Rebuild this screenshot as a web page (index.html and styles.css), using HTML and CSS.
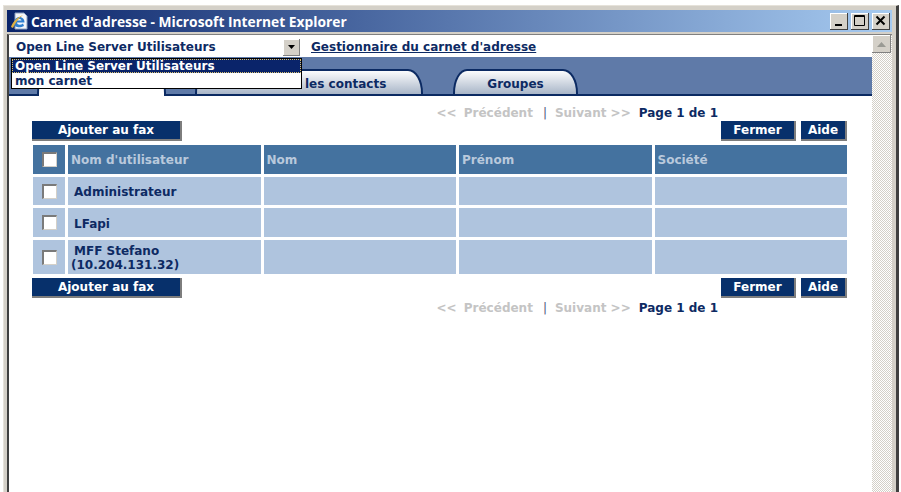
FILE: index.html
```html
<!DOCTYPE html>
<html lang="fr">
<head>
    <meta charset="UTF-8">
    <meta name="viewport" content="width=device-width, initial-scale=1.0">
    <title>Carnet d'adresse</title>
    <link rel="stylesheet" href="styles.css">
</head>
<body>
    <div class="window">
        <div class="titlebar">
            <svg class="ie-icon" width="18" height="18" viewBox="0 0 18 18">
                <path d="M5 1h9l3 3v13H5z" fill="#f4f6fa" stroke="#8ca0c0" stroke-width="1"/>
                <path d="M4 11.500c0-4 2.500-6.500 5.500-6.500s5 2.300 5 5.500H7c.2 2.500 3.500 3 6 1l1 2.500c-4 2.500-10 1.500-10-2.500zM7 8.500h4.500C11 6.500 7.800 6.500 7 8.500z" fill="#2f7fd0"/>
                <path d="M1 15c1-4 6-10 12-12-4 3-8 8-10 13z" fill="#e0b040"/>
            </svg>
            <span class="title-text">Carnet d'adresse - Microsoft Internet Explorer</span>
            <div class="win-buttons">
                <span class="win-btn"><svg width="16" height="14" viewBox="0 0 16 14"><rect x="4" y="10" width="7" height="2" fill="#000"/></svg></span>
                <span class="win-btn"><svg width="16" height="14" viewBox="0 0 16 14"><path d="M2.500 1.500h10v10h-10z M2 2.500h11" fill="none" stroke="#000"/></svg></span>
                <span class="win-btn win-close"><svg width="16" height="14" viewBox="0 0 16 14"><path d="M3.500 2.500l8 8M11.500 2.500l-8 8" stroke="#000" stroke-width="2"/></svg></span>
            </div>
        </div>

        <div class="client">
            <div class="page">
                <div class="selector-row">
                    <div class="select">
                        <span>Open Line Server Utilisateurs</span>
                        <span class="select-arrow"><svg width="7" height="4" viewBox="0 0 7 4"><path d="M0 0h7L3.500 4z" fill="#000"/></svg></span>
                    </div>
                    <a class="manager-link" href="#">Gestionnaire du carnet d'adresse</a>
                </div>

                <div class="tabbar">
                    <div class="tab tab-active"></div>
                    <div class="tab tab-contacts">les contacts</div>
                    <div class="tab tab-groups">Groupes</div>
                </div>

                <div class="content">
                    <div class="pager">
                        <span class="pager-muted pager-prev">&lt;&lt; Précédent</span>
                        <span class="pager-sep">|</span>
                        <span class="pager-muted">Suivant &gt;&gt;</span>
                        <span class="pager-page">Page 1 de 1</span>
                    </div>
                    <div class="actions">
                        <a class="btn btn-add" href="#">Ajouter au fax</a>
                        <div class="actions-right">
                            <a class="btn btn-close" href="#">Fermer</a>
                            <a class="btn btn-help" href="#">Aide</a>
                        </div>
                    </div>

                    <table class="contacts">
                        <thead>
                            <tr>
                                <th class="col-check"><input class="check" type="checkbox"></th>
                                <th>Nom d'utilisateur</th>
                                <th>Nom</th>
                                <th>Prénom</th>
                                <th>Société</th>
                            </tr>
                        </thead>
                        <tbody>
                            <tr>
                                <td class="col-check"><input class="check" type="checkbox"></td>
                                <td class="user"><span class="user-first">Administrateur</span></td>
                                <td></td><td></td><td></td>
                            </tr>
                            <tr class="row-mid">
                                <td class="col-check"><input class="check" type="checkbox"></td>
                                <td class="user"><span class="user-first">LFapi</span></td>
                                <td></td><td></td><td></td>
                            </tr>
                            <tr class="row-tall">
                                <td class="col-check"><input class="check" type="checkbox"></td>
                                <td class="user"><span class="user-first">MFF Stefano</span><br>(10.204.131.32)</td>
                                <td></td><td></td><td></td>
                            </tr>
                        </tbody>
                    </table>

                    <div class="actions actions-bottom">
                        <a class="btn btn-add" href="#">Ajouter au fax</a>
                        <div class="actions-right">
                            <a class="btn btn-close" href="#">Fermer</a>
                            <a class="btn btn-help" href="#">Aide</a>
                        </div>
                    </div>
                    <div class="pager pager-bottom">
                        <span class="pager-muted pager-prev">&lt;&lt; Précédent</span>
                        <span class="pager-sep">|</span>
                        <span class="pager-muted">Suivant &gt;&gt;</span>
                        <span class="pager-page">Page 1 de 1</span>
                    </div>
                </div>

                <div class="dropdown">
                    <div class="dropdown-item dropdown-selected">Open Line Server Utilisateurs</div>
                    <div class="dropdown-item">mon carnet</div>
                </div>
            </div>

            <div class="scrollbar">
                <span class="scroll-up"><svg width="9" height="5" viewBox="0 0 9 5"><path d="M0 5h9L4.500 0z" fill="#9a9a94"/></svg></span>
            </div>
        </div>
    </div>
</body>
</html>
```

FILE: styles.css
```css
html, body {
    margin: 0;
    padding: 0;
    background: #fff;
    height: 492px;
    overflow: hidden;
}
body {
    font-family: "DejaVu Sans", Verdana, sans-serif;
    font-size: 12px;
    font-weight: bold;
    color: #0d2a63;
    padding: 5px 2px 0 3px;
    box-sizing: border-box;
}
.window {
    height: 487px;
    box-sizing: border-box;
    background: #d4d0c8;
    border-top: 1px solid #e6e2da;
    border-left: 1px solid #e6e2da;
    border-right: 3px solid #404040;
    padding: 4px 4px 0 3px;
    display: flex;
    flex-direction: column;
}
.titlebar {
    height: 22px;
    flex: none;
    display: flex;
    align-items: center;
    background: linear-gradient(to right, #0a246a, #a6caf0);
    color: #fff;
    padding: 0 2px 0 3px;
}
.ie-icon {
    flex: none;
    margin-right: 3px;
}
.title-text {
    font-family: "Open Sans", "DejaVu Sans", sans-serif;
    font-size: 13.800px;
    font-weight: bold;
    white-space: nowrap;
}
.win-buttons {
    margin-left: auto;
    display: flex;
    gap: 3px;
}
.win-btn {
    width: 18px;
    height: 17px;
    background: #d4d0c8;
    box-shadow: inset -1px -1px 0 #404040, inset 1px 1px 0 #fff;
    display: flex;
    align-items: center;
    justify-content: center;
}
.client {
    flex: 1;
    min-height: 0;
    margin-top: 2px;
    display: flex;
    border-top: 1px solid #808080;
    border-left: 2px solid #404040;
    background: #fff;
}
.page {
    flex: 1;
    min-width: 0;
    position: relative;
}
.selector-row {
    height: 22px;
    box-sizing: border-box;
    padding-top: 2px;
    display: flex;
    align-items: center;
}
.select {
    width: 288px;
    height: 20px;
    margin-left: 3px;
    padding-left: 4px;
    box-sizing: border-box;
    display: flex;
    align-items: center;
    justify-content: space-between;
    white-space: nowrap;
}
.select-arrow {
    width: 17px;
    height: 17px;
    background: #d4d0c8;
    box-shadow: inset -1px -1px 0 #808080, inset 1px 1px 0 #fff;
    display: flex;
    align-items: center;
    justify-content: center;
}
.manager-link {
    margin-left: 11px;
    color: #0d2a63;
    text-decoration: underline;
    white-space: nowrap;
}
.tabbar {
    height: 39px;
    box-sizing: border-box;
    background: #5f7aa8;
    border-bottom: 2px solid #0b2a62;
    display: flex;
    align-items: flex-end;
    padding-left: 28px;
}
.tab {
    height: 25px;
    box-sizing: border-box;
    padding-top: 2px;
    border: 2px solid #0b2a62;
    border-bottom: none;
    border-radius: 14px 15px 0 0 / 24px 24px 0 0;
    background: linear-gradient(to bottom, #fbfcfd, #a9b6c8);
    display: flex;
    align-items: center;
    justify-content: center;
    white-space: nowrap;
}
.tab-active {
    width: 129px;
    height: 27px;
    margin-bottom: -2px;
    background: #fff;
}
.tab-contacts {
    width: 228px;
    margin-left: 29px;
    padding-left: 108px;
    justify-content: flex-start;
}
.tab-groups {
    width: 125px;
    margin-left: 30px;
}
.content {
    padding: 10px 0 0 23px;
}
.pager {
    height: 14px;
    width: 686px;
    display: flex;
    justify-content: flex-end;
    align-items: center;
    gap: 8px;
    white-space: nowrap;
}
.pager-muted {
    color: #c4c4c4;
}
.pager-prev {
    word-spacing: 3px;
    margin-right: 2px;
}
.pager-sep {
    color: #4a5a78;
    font-weight: normal;
}
.actions {
    width: 815px;
    margin-top: 1px;
    display: flex;
    justify-content: space-between;
}
.actions-right {
    display: flex;
    gap: 5px;
}
.btn {
    height: 20px;
    box-sizing: border-box;
    background: #07306b;
    color: #fff;
    text-decoration: none;
    display: flex;
    align-items: center;
    justify-content: center;
    border-right: 2px solid #7d7d7d;
    border-bottom: 2px solid #7d7d7d;
    white-space: nowrap;
}
.btn-add {
    width: 150px;
}
.btn-close {
    width: 75px;
}
.btn-help {
    width: 46px;
}
.contacts {
    width: 820px;
    table-layout: fixed;
    border-collapse: separate;
    border-spacing: 3px;
    margin: 1px 0 0 -2px;
    font-size: 12px;
}
.contacts th {
    background: #44729f;
    color: #b9c9dc;
    height: 29px;
    padding: 0 0 0 3px;
    text-align: left;
    font-weight: bold;
}
.contacts td {
    background: #afc4de;
    height: 28px;
    padding: 0;
}
.contacts th.col-check, .contacts td.col-check {
    width: 32px;
    padding: 0;
    text-align: center;
}
.contacts .row-mid td {
    height: 29px;
}
.contacts .row-tall td {
    height: 34px;
}
.contacts td.user {
    padding: 2px 0 0 3px;
    box-sizing: border-box;
    line-height: 14px;
}
.user-first {
    margin-left: 3px;
}
.check {
    appearance: none;
    display: inline-block;
    width: 15px;
    height: 15px;
    margin: 0;
    background: #fff;
    box-sizing: border-box;
    border-top: 2px solid #7a7a7a;
    border-left: 2px solid #7a7a7a;
    border-right: 1px solid #d4d0c8;
    border-bottom: 1px solid #d4d0c8;
    vertical-align: middle;
}
.pager-bottom {
    margin-top: 3px;
}
.dropdown {
    position: absolute;
    left: 2px;
    top: 23px;
    width: 291px;
    box-sizing: border-box;
    background: #fff;
    border: 1px solid #000;
}
.dropdown-item {
    height: 14px;
    line-height: 15px;
    padding-left: 3px;
    color: #0d2a63;
}
.dropdown-item + .dropdown-item {
    height: 15px;
    line-height: 16px;
}
.dropdown-selected {
    background: #0a246a;
    color: #fff;
    outline: 1px dotted #d8c070;
    outline-offset: -1px;
}
.scrollbar {
    width: 20px;
    flex: none;
    background: conic-gradient(#d4d0c8 25%, #fff 0 50%, #d4d0c8 0 75%, #fff 0) 0 0 / 2px 2px;
}
.scroll-up {
    width: 19px;
    height: 18px;
    background: #d4d0c8;
    box-shadow: inset -1px -1px 0 #808080, inset 1px 1px 0 #fff;
    display: flex;
    align-items: center;
    justify-content: center;
}
```
